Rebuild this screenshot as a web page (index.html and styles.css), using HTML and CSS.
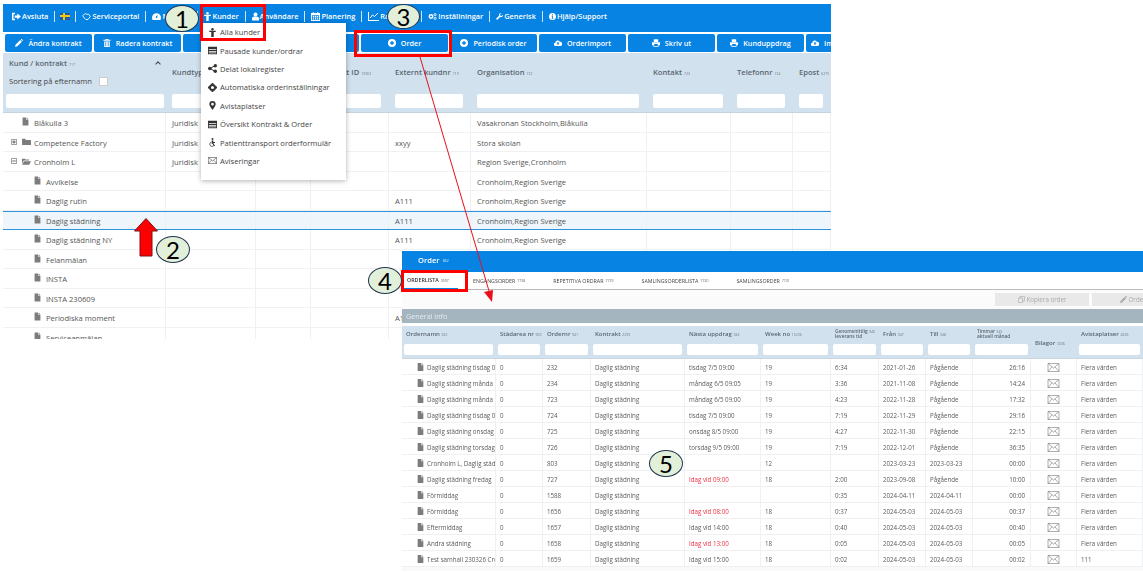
FILE: index.html
```html
<!DOCTYPE html>
<html lang="sv">
<head>
    <meta charset="UTF-8" />
    <title>Kunder och order</title>
    <link rel="stylesheet" href="styles.css">
</head>
<body>
<svg class="defs" width="0" height="0">
    <symbol id="i-doc" viewBox="0 0 12 14"><path d="M1 0h6v4h4v10H1zM8 0l3 3H8z"/></symbol>
    <symbol id="i-folder" viewBox="0 0 14 11"><path d="M0 1h5l1 2h8v8H0z"/></symbol>
    <symbol id="i-open" viewBox="0 0 15 11"><path d="M0 1h5l1 1h6v2H3L0 9zM3.5 5H15l-3 6H0z"/></symbol>
    <symbol id="i-plus" viewBox="0 0 7 7"><path fill="#fff" stroke="#888" d="M.5.5h6v6h-6z"/><path fill="#555" d="M3 1.5h1V3h1.500v1H4v1.500H3V4H1.500V3H3z"/></symbol>
    <symbol id="i-minus" viewBox="0 0 7 7"><path fill="#fff" stroke="#888" d="M.5.5h6v6h-6z"/><path fill="#555" d="M1.500 3h4v1h-4z"/></symbol>
    <symbol id="i-exit" viewBox="0 0 12 10"><path d="M4 0v2H2v6h2v2H0V0zM7 1l5 4-5 4V6.500H3.500v-3H7z"/></symbol>
    <symbol id="i-service" viewBox="0 0 12 10"><path fill="none" stroke="currentColor" stroke-width="1.200" d="M1 4l3-3 2 1h3l2 3-3 4H5L3 7z"/></symbol>
    <symbol id="i-gauge" viewBox="0 0 12 9"><path fill-rule="evenodd" d="M6 0a6 6 0 0 1 6 6c0 1-.3 2-.8 3H.8C.3 8 0 7 0 6a6 6 0 0 1 6-6zM5.300 4.500v2h1.400l1-4z"/></symbol>
    <symbol id="i-man" viewBox="0 0 8 11"><circle cx="4" cy="1.500" r="1.500"/><path d="M0 3.500h8v1.500H5.500v6h-3V5H0z"/></symbol>
    <symbol id="i-user" viewBox="0 0 9 10"><circle cx="4.500" cy="2.500" r="2.500"/><path d="M0 10V7.500C0 6 1.500 5 3 5h3c1.500 0 3 1 3 2.500V10z"/></symbol>
    <symbol id="i-cal" viewBox="0 0 10 10"><path fill-rule="evenodd" d="M0 1h2V0h1v1h4V0h1v1h2v9H0zM1 3.500v5.500h8V3.500zM2 4.500h1.500V6H2zM4.300 4.500h1.500V6H4.300zM6.500 4.500H8V6H6.500zM2 7h1.500v1.300H2zM4.300 7h1.500v1.300H4.300zM6.500 7H8v1.300H6.500z"/></symbol>
    <symbol id="i-chart" viewBox="0 0 11 9"><path d="M0 0h1v8h10v1H0z"/><path fill="none" stroke="currentColor" d="M2 6l2.500-3 2 1.500L10 1"/></symbol>
    <symbol id="i-cogs" viewBox="0 0 12 10"><circle cx="4" cy="5" r="2.300" fill="none" stroke="currentColor" stroke-width="2"/><circle cx="9.500" cy="2.500" r="1.400" fill="none" stroke="currentColor" stroke-width="1.200"/><circle cx="9.500" cy="7.500" r="1.400" fill="none" stroke="currentColor" stroke-width="1.200"/></symbol>
    <symbol id="i-wrench" viewBox="0 0 10 10"><path d="M10 2.500L8 4.300 6.300 3.800 5.800 2 7.600 0C6 -.3 4.300 1 4.200 2.600c0 .5.100 1 .2 1.300L0 8.300 1.700 10l4.400-4.400c2 .7 4.300-1 3.900-3.100z"/></symbol>
    <symbol id="i-info" viewBox="0 0 10 10"><path fill-rule="evenodd" d="M5 0a5 5 0 1 1 0 10A5 5 0 0 1 5 0zM4.200 1.800v1.500h1.600V1.800zM3.800 4v1h.6v2.300h-.6v1h2.400v-1h-.6V4z"/></symbol>
    <symbol id="i-pencil" viewBox="0 0 10 10"><path d="M0 10l.8-3L6.500 1.300l2.200 2.200L3 9.200zM7.200.6C7.800 0 8.500 0 9 .5l.5.5c.5.500.5 1.200-.1 1.800z"/></symbol>
    <symbol id="i-trash" viewBox="0 0 9 10"><path fill-rule="evenodd" d="M3 0h3l.5 1H9v1.200H0V1h2.500zM1 3h7v7H1zM2.500 4v5h1V4zM5.500 4v5h1V4z"/></symbol>
    <symbol id="i-add" viewBox="0 0 10 10"><path fill-rule="evenodd" d="M5 0a5 5 0 1 1 0 10A5 5 0 0 1 5 0zM4.200 2.500v1.700H2.500v1.600h1.700v1.700h1.600V5.800h1.700V4.200H5.800V2.500z"/></symbol>
    <symbol id="i-cloud" viewBox="0 0 12 9"><path fill-rule="evenodd" d="M2.500 9A2.500 2.500 0 0 1 2 4a3.500 3.500 0 0 1 6.700-1.200A3 3 0 0 1 9.500 9zM6 2.500L3.800 5.200h1.400V7.500h1.600V5.200h1.400z"/></symbol>
    <symbol id="i-print" viewBox="0 0 11 10"><path fill-rule="evenodd" d="M2.500 0h6v3.500h-6zM0 4h11v4H9v2H2V8H0zM3 6.500V9h5V6.500z"/></symbol>
    <symbol id="i-list" viewBox="0 0 11 9"><path fill-rule="evenodd" d="M0 0h11v9H0zM1 3v1h9V3zM1 5v1h9V5zM1 7v1h9V7z"/></symbol>
    <symbol id="i-share" viewBox="0 0 9 9"><circle cx="1.800" cy="4.500" r="1.800"/><circle cx="7.300" cy="1.700" r="1.700"/><circle cx="7.300" cy="7.300" r="1.700"/><path fill="none" stroke="currentColor" d="M2 4.500l5-2.800M2 4.500l5 2.800"/></symbol>
    <symbol id="i-cog" viewBox="0 0 10 10"><circle cx="5" cy="5" r="2.800" fill="none" stroke="currentColor" stroke-width="2.200"/><path d="M4 0h2v2H4zM4 8h2v2H4zM0 4h2v2H0zM8 4h2v2H8z"/></symbol>
    <symbol id="i-pin" viewBox="0 0 7 10"><path fill-rule="evenodd" d="M3.500 0a3.500 3.500 0 0 1 3.500 3.500C7 5.500 4.500 8 3.500 10 2.500 8 0 5.500 0 3.500A3.500 3.500 0 0 1 3.500 0zM3.500 2a1.500 1.500 0 1 0 0 3 1.500 1.500 0 0 0 0-3z"/></symbol>
    <symbol id="i-wheel" viewBox="0 0 9 11"><circle cx="4.500" cy="1.200" r="1.200"/><path d="M3.500 3h2v2h2v1H5.500l2 3.500-1 .5L4.500 7H3.500z"/><path fill="none" stroke="currentColor" d="M2.800 5a2.800 2.800 0 1 0 3.700 3.800"/></symbol>
    <symbol id="i-mail" viewBox="0 0 12 9"><path fill="none" stroke="currentColor" stroke-width=".7" d="M.5.500h11v8H.5zM.5.500L6 5l5.500-4.500M.5 8.500L4.500 4M11.500 8.500L7.500 4"/></symbol>
    <symbol id="i-copy" viewBox="0 0 10 10"><path fill="none" stroke="currentColor" d="M.5 3h6v6.500h-6zM3 3V.5h6.500v6.500H6.500"/></symbol>
</svg>

<div class="canvas">
    <div class="main">
        <nav class="topbar">
            <a class="nav"><svg class="ic"><use href="#i-exit"/></svg>Avsluta</a>
            <a class="nav"><span class="flag"></span></a>
            <a class="nav"><svg class="ic"><use href="#i-service"/></svg>Serviceportal</a>
            <a class="nav nav-hidden"><svg class="ic"><use href="#i-gauge"/></svg>Min sida</a>
            <a class="nav"><svg class="ic ic-s"><use href="#i-man"/></svg>Kunder</a>
            <a class="nav"><svg class="ic ic-s"><use href="#i-user"/></svg>Användare</a>
            <a class="nav"><svg class="ic"><use href="#i-cal"/></svg>Planering</a>
            <a class="nav nav-report"><svg class="ic ic-w"><use href="#i-chart"/></svg>Rapporter</a>
            <a class="nav"><svg class="ic"><use href="#i-cogs"/></svg>Inställningar</a>
            <a class="nav"><svg class="ic ic-s"><use href="#i-wrench"/></svg>Generisk</a>
            <a class="nav last"><svg class="ic ic-s"><use href="#i-info"/></svg>Hjälp/Support</a>
        </nav>

        <div class="toolbar">
            <button class="btn"><svg class="ic"><use href="#i-pencil"/></svg>Ändra kontrakt</button>
            <button class="btn"><svg class="ic"><use href="#i-trash"/></svg>Radera kontrakt</button>
            <button class="btn"><svg class="ic"><use href="#i-add"/></svg>Kopiera</button>
            <button class="btn"><svg class="ic"><use href="#i-add"/></svg>Ny kund</button>
            <button class="btn"><svg class="ic"><use href="#i-add"/></svg>Order</button>
            <button class="btn"><svg class="ic"><use href="#i-add"/></svg>Periodisk order</button>
            <button class="btn"><svg class="ic"><use href="#i-cloud"/></svg>Orderimport</button>
            <button class="btn"><svg class="ic"><use href="#i-print"/></svg>Skriv ut</button>
            <button class="btn"><svg class="ic"><use href="#i-print"/></svg>Kunduppdrag</button>
            <button class="btn btn-cut"><svg class="ic"><use href="#i-cloud"/></svg>Importera</button>
        </div>

        <div class="cols thead">
            <div class="th first">
                <div class="th-title">Kund / kontrakt <small>717</small><span class="chev"></span></div>
                <div class="th-sort">Sortering på efternamn<span class="check"></span></div>
                <input class="filter">
            </div>
            <div class="th"><div class="label">Kundtyp <small>718</small></div><input class="filter"></div>
            <div class="th"><div class="label">Org.nr <small>720</small></div><input class="filter"></div>
            <div class="th"><div class="label">Kontrakt ID <small>10963</small></div><input class="filter"></div>
            <div class="th"><div class="label">Externt kundnr <small>719</small></div><input class="filter"></div>
            <div class="th"><div class="label">Organisation <small>722</small></div><input class="filter"></div>
            <div class="th"><div class="label">Kontakt <small>723</small></div><input class="filter"></div>
            <div class="th"><div class="label">Telefonnr <small>724</small></div><input class="filter"></div>
            <div class="th"><div class="label">Epost <small>6275</small></div><input class="filter"></div>
        </div>

        <div class="cols row">
            <div class="td name lvl1"><svg class="doc"><use href="#i-doc"/></svg>Blåkulla 3</div><div class="td">Juridisk</div><div class="td"></div><div class="td"></div><div class="td"></div><div class="td">Vasakronan Stockholm,Blåkulla</div><div class="td"></div><div class="td"></div><div class="td"></div>
        </div>
        <div class="cols row">
            <div class="td name"><svg class="box"><use href="#i-plus"/></svg><svg class="fold"><use href="#i-folder"/></svg>Competence Factory</div><div class="td">Juridisk</div><div class="td"></div><div class="td"></div><div class="td">xxyy</div><div class="td">Stora skolan</div><div class="td"></div><div class="td"></div><div class="td"></div>
        </div>
        <div class="cols row">
            <div class="td name"><svg class="box"><use href="#i-minus"/></svg><svg class="fold"><use href="#i-open"/></svg>Cronholm L</div><div class="td">Juridisk</div><div class="td"></div><div class="td"></div><div class="td"></div><div class="td">Region Sverige,Cronholm</div><div class="td"></div><div class="td"></div><div class="td"></div>
        </div>
        <div class="cols row">
            <div class="td name lvl2"><svg class="doc"><use href="#i-doc"/></svg>Avvikelse</div><div class="td"></div><div class="td"></div><div class="td"></div><div class="td"></div><div class="td">Cronholm,Region Sverige</div><div class="td"></div><div class="td"></div><div class="td"></div>
        </div>
        <div class="cols row">
            <div class="td name lvl2"><svg class="doc"><use href="#i-doc"/></svg>Daglig rutin</div><div class="td"></div><div class="td"></div><div class="td"></div><div class="td">A111</div><div class="td">Cronholm,Region Sverige</div><div class="td"></div><div class="td"></div><div class="td"></div>
        </div>
        <div class="cols row selected">
            <div class="td name lvl2"><svg class="doc"><use href="#i-doc"/></svg>Daglig städning</div><div class="td"></div><div class="td"></div><div class="td"></div><div class="td">A111</div><div class="td">Cronholm,Region Sverige</div><div class="td"></div><div class="td"></div><div class="td"></div>
        </div>
        <div class="cols row">
            <div class="td name lvl2"><svg class="doc"><use href="#i-doc"/></svg>Daglig städning NY</div><div class="td"></div><div class="td"></div><div class="td"></div><div class="td">A111</div><div class="td">Cronholm,Region Sverige</div><div class="td"></div><div class="td"></div><div class="td"></div>
        </div>
        <div class="cols row">
            <div class="td name lvl2"><svg class="doc"><use href="#i-doc"/></svg>Felanmälan</div><div class="td"></div><div class="td"></div><div class="td"></div><div class="td"></div><div class="td"></div><div class="td"></div><div class="td"></div><div class="td"></div>
        </div>
        <div class="cols row">
            <div class="td name lvl2"><svg class="doc"><use href="#i-doc"/></svg>INSTA</div><div class="td"></div><div class="td"></div><div class="td"></div><div class="td"></div><div class="td"></div><div class="td"></div><div class="td"></div><div class="td"></div>
        </div>
        <div class="cols row">
            <div class="td name lvl2"><svg class="doc"><use href="#i-doc"/></svg>INSTA 230609</div><div class="td"></div><div class="td"></div><div class="td"></div><div class="td"></div><div class="td"></div><div class="td"></div><div class="td"></div><div class="td"></div>
        </div>
        <div class="cols row">
            <div class="td name lvl2"><svg class="doc"><use href="#i-doc"/></svg>Periodiska moment</div><div class="td"></div><div class="td"></div><div class="td"></div><div class="td">A111</div><div class="td"></div><div class="td"></div><div class="td"></div><div class="td"></div>
        </div>
        <div class="cols row">
            <div class="td name lvl2"><svg class="doc"><use href="#i-doc"/></svg>Serviceanmälan</div><div class="td"></div><div class="td"></div><div class="td"></div><div class="td"></div><div class="td"></div><div class="td"></div><div class="td"></div><div class="td"></div>
        </div>
    </div>

    <ul class="menu">
        <li><svg class="ic"><use href="#i-man"/></svg>Alla kunder</li>
        <li><svg class="ic"><use href="#i-list"/></svg>Pausade kunder/ordrar</li>
        <li><svg class="ic"><use href="#i-share"/></svg>Delat lokalregister</li>
        <li><svg class="ic"><use href="#i-cog"/></svg>Automatiska orderinställningar</li>
        <li><svg class="ic"><use href="#i-pin"/></svg>Avistaplatser</li>
        <li><svg class="ic"><use href="#i-list"/></svg>Översikt Kontrakt &amp; Order</li>
        <li><svg class="ic"><use href="#i-wheel"/></svg>Patienttransport orderformulär</li>
        <li><svg class="ic"><use href="#i-mail"/></svg>Aviseringar</li>
    </ul>

    <section class="order">
        <header class="order-head">Order <small>862</small></header>
        <div class="tabs">
            <a class="tab active">ORDERLISTA <small>3597</small></a>
            <a class="tab">ENGÅNGSORDER <small>7738</small></a>
            <a class="tab">REPETITIVA ORDRAR <small>7739</small></a>
            <a class="tab">SAMLINGSORDERLISTA <small>7740</small></a>
            <a class="tab">SAMLINGSORDER <small>7741</small></a>
        </div>
        <div class="actions">
            <button class="grey-btn"><svg class="ic"><use href="#i-copy"/></svg>Kopiera order</button>
            <button class="grey-btn"><svg class="ic"><use href="#i-pencil"/></svg>Order info</button>
        </div>
        <div class="info-bar">General info</div>

        <div class="ocols ohead">
            <div class="oth"><div class="olabel">Ordernamn <small>942</small></div><input class="ofilter"></div>
            <div class="oth"><div class="olabel">Städarea nr <small>969</small></div><input class="ofilter"></div>
            <div class="oth"><div class="olabel">Ordernr <small>941</small></div><input class="ofilter"></div>
            <div class="oth"><div class="olabel">Kontrakt <small>2299</small></div><input class="ofilter"></div>
            <div class="oth"><div class="olabel">Nästa uppdrag <small>944</small></div><input class="ofilter"></div>
            <div class="oth"><div class="olabel">Week no <small>15236</small></div><input class="ofilter"></div>
            <div class="oth"><div class="olabel tight">Genomsnittlig <small>946</small><br>leverans tid</div><input class="ofilter"></div>
            <div class="oth"><div class="olabel">Från <small>947</small></div><input class="ofilter"></div>
            <div class="oth"><div class="olabel">Till <small>948</small></div><input class="ofilter"></div>
            <div class="oth"><div class="olabel tight">Timmar <small>949</small><br>aktuell månad</div><input class="ofilter"></div>
            <div class="oth plain"><div class="olabel">Bilagor <small>3336</small></div></div>
            <div class="oth"><div class="olabel">Avistaplatser <small>4696</small></div><input class="ofilter"></div>
        </div>

        <div class="ocols orow"><div class="otd oname"><svg class="odoc"><use href="#i-doc"/></svg>Daglig städning tisdag 0</div><div class="otd">0</div><div class="otd">232</div><div class="otd">Daglig städning</div><div class="otd">tisdag 7/5 09:00</div><div class="otd">19</div><div class="otd">6:34</div><div class="otd">2021-01-26</div><div class="otd">Pågående</div><div class="otd num">26:16</div><div class="otd mid"><svg class="mail"><use href="#i-mail"/></svg></div><div class="otd">Fiera värden</div></div>
        <div class="ocols orow"><div class="otd oname"><svg class="odoc"><use href="#i-doc"/></svg>Daglig städning månda</div><div class="otd">0</div><div class="otd">234</div><div class="otd">Daglig städning</div><div class="otd">måndag 6/5 09:05</div><div class="otd">19</div><div class="otd">3:36</div><div class="otd">2021-11-08</div><div class="otd">Pågående</div><div class="otd num">14:24</div><div class="otd mid"><svg class="mail"><use href="#i-mail"/></svg></div><div class="otd">Fiera värden</div></div>
        <div class="ocols orow"><div class="otd oname"><svg class="odoc"><use href="#i-doc"/></svg>Daglig städning månda</div><div class="otd">0</div><div class="otd">723</div><div class="otd">Daglig städning</div><div class="otd">måndag 6/5 09:00</div><div class="otd">19</div><div class="otd">4:23</div><div class="otd">2022-11-28</div><div class="otd">Pågående</div><div class="otd num">17:32</div><div class="otd mid"><svg class="mail"><use href="#i-mail"/></svg></div><div class="otd">Fiera värden</div></div>
        <div class="ocols orow"><div class="otd oname"><svg class="odoc"><use href="#i-doc"/></svg>Daglig städning tisdag 0</div><div class="otd">0</div><div class="otd">724</div><div class="otd">Daglig städning</div><div class="otd">tisdag 7/5 09:00</div><div class="otd">19</div><div class="otd">7:19</div><div class="otd">2022-11-29</div><div class="otd">Pågående</div><div class="otd num">29:16</div><div class="otd mid"><svg class="mail"><use href="#i-mail"/></svg></div><div class="otd">Fiera värden</div></div>
        <div class="ocols orow"><div class="otd oname"><svg class="odoc"><use href="#i-doc"/></svg>Daglig städning onsdag</div><div class="otd">0</div><div class="otd">725</div><div class="otd">Daglig städning</div><div class="otd">onsdag 8/5 09:00</div><div class="otd">19</div><div class="otd">4:27</div><div class="otd">2022-11-30</div><div class="otd">Pågående</div><div class="otd num">22:15</div><div class="otd mid"><svg class="mail"><use href="#i-mail"/></svg></div><div class="otd">Fiera värden</div></div>
        <div class="ocols orow"><div class="otd oname"><svg class="odoc"><use href="#i-doc"/></svg>Daglig städning torsdag</div><div class="otd">0</div><div class="otd">726</div><div class="otd">Daglig städning</div><div class="otd">torsdag 9/5 09:00</div><div class="otd">19</div><div class="otd">7:19</div><div class="otd">2022-12-01</div><div class="otd">Pågående</div><div class="otd num">36:35</div><div class="otd mid"><svg class="mail"><use href="#i-mail"/></svg></div><div class="otd">Fiera värden</div></div>
        <div class="ocols orow"><div class="otd oname"><svg class="odoc"><use href="#i-doc"/></svg>Cronholm L, Daglig städ</div><div class="otd">0</div><div class="otd">803</div><div class="otd">Daglig städning</div><div class="otd"></div><div class="otd">12</div><div class="otd"></div><div class="otd">2023-03-23</div><div class="otd">2023-03-23</div><div class="otd num">00:00</div><div class="otd mid"><svg class="mail"><use href="#i-mail"/></svg></div><div class="otd">Fiera värden</div></div>
        <div class="ocols orow"><div class="otd oname"><svg class="odoc"><use href="#i-doc"/></svg>Daglig städning fredag</div><div class="otd">0</div><div class="otd">727</div><div class="otd">Daglig städning</div><div class="otd late">Idag vid 09:00</div><div class="otd">18</div><div class="otd">2:00</div><div class="otd">2023-09-08</div><div class="otd">Pågående</div><div class="otd num">10:00</div><div class="otd mid"><svg class="mail"><use href="#i-mail"/></svg></div><div class="otd">Fiera värden</div></div>
        <div class="ocols orow"><div class="otd oname"><svg class="odoc"><use href="#i-doc"/></svg>Förmiddag</div><div class="otd">0</div><div class="otd">1588</div><div class="otd">Daglig städning</div><div class="otd"></div><div class="otd"></div><div class="otd">0:35</div><div class="otd">2024-04-11</div><div class="otd">2024-04-11</div><div class="otd num">00:00</div><div class="otd mid"><svg class="mail"><use href="#i-mail"/></svg></div><div class="otd">Fiera värden</div></div>
        <div class="ocols orow"><div class="otd oname"><svg class="odoc"><use href="#i-doc"/></svg>Förmiddag</div><div class="otd">0</div><div class="otd">1656</div><div class="otd">Daglig städning</div><div class="otd late">Idag vid 08:00</div><div class="otd">18</div><div class="otd">0:37</div><div class="otd">2024-05-03</div><div class="otd">2024-05-03</div><div class="otd num">00:37</div><div class="otd mid"><svg class="mail"><use href="#i-mail"/></svg></div><div class="otd">Fiera värden</div></div>
        <div class="ocols orow"><div class="otd oname"><svg class="odoc"><use href="#i-doc"/></svg>Eftermiddag</div><div class="otd">0</div><div class="otd">1657</div><div class="otd">Daglig städning</div><div class="otd">Idag vid 14:00</div><div class="otd">18</div><div class="otd">0:40</div><div class="otd">2024-05-03</div><div class="otd">2024-05-03</div><div class="otd num">00:40</div><div class="otd mid"><svg class="mail"><use href="#i-mail"/></svg></div><div class="otd">Fiera värden</div></div>
        <div class="ocols orow"><div class="otd oname"><svg class="odoc"><use href="#i-doc"/></svg>Andra städning</div><div class="otd">0</div><div class="otd">1658</div><div class="otd">Daglig städning</div><div class="otd late">Idag vid 13:00</div><div class="otd">18</div><div class="otd">0:05</div><div class="otd">2024-05-03</div><div class="otd">2024-05-03</div><div class="otd num">00:05</div><div class="otd mid"><svg class="mail"><use href="#i-mail"/></svg></div><div class="otd">Fiera värden</div></div>
        <div class="ocols orow"><div class="otd oname"><svg class="odoc"><use href="#i-doc"/></svg>Test samhall 230326 Cro</div><div class="otd">0</div><div class="otd">1659</div><div class="otd">Daglig städning</div><div class="otd">Idag vid 15:00</div><div class="otd">18</div><div class="otd">0:02</div><div class="otd">2024-05-03</div><div class="otd">2024-05-03</div><div class="otd num">00:02</div><div class="otd mid"><svg class="mail"><use href="#i-mail"/></svg></div><div class="otd">111</div></div>
        <div class="order-foot"></div>
    </section>

    <!-- annotations on top of the screenshot -->
    <svg class="pointer" width="1143" height="573">
        <path d="M420 57L489 291" stroke="#e8101a" stroke-width="1" fill="none"/>
        <path d="M492 302L484 292 493 290z" fill="#e8101a"/>
        <path d="M146 218.500L157.500 231H152V256H140V231H134.500z" fill="#f00" stroke="#7a1218" stroke-width="1"/>
    </svg>
    <div class="mark mark-kunder"></div>
    <div class="mark mark-order"></div>
    <div class="mark mark-tab"></div>
    <div class="step step-1">1</div>
    <div class="step step-2">2</div>
    <div class="step step-3">3</div>
    <div class="step step-4">4</div>
    <div class="step step-5">5</div>
</div>
</body>
</html>
```

FILE: styles.css
```css
* {
    margin: 0;
    padding: 0;
    box-sizing: border-box;
}
html, body {
    background: #fff;
    overflow: hidden;
}
body {
    font-family: "Open Sans", sans-serif;
    color: #555;
}
.defs {
    position: absolute;
}
.canvas {
    position: relative;
    width: 1143px;
    height: 573px;
    overflow: hidden;
}
small {
    font-size: 3.5px;
    font-weight: 400;
    opacity: .8;
}
input {
    display: block;
    border: 0;
    background: #fff;
}
svg {
    fill: currentColor;
}

/* left page */
.main {
    width: 828px;
    height: 335px;
    margin: 4px 0 0 3px;
    overflow: hidden;
}
.topbar {
    display: flex;
    align-items: center;
    height: 28px;
    padding: 0 0 4px 3px;
    background: #0683e3;
    color: #fff;
    font-size: 7.400px;
    font-weight: 600;
}
.nav {
    display: flex;
    align-items: center;
    height: 11px;
    padding: 0 6px;
    border-right: 1px solid #cfe6f9;
    white-space: nowrap;
}
.nav.last {
    border-right: 0;
}
.nav-hidden {
    width: 52px;
    flex: none;
}
.nav-report {
    width: 60px;
    flex: none;
    overflow: hidden;
}
.ic {
    width: 9px;
    height: 9px;
    margin-right: 1px;
    flex: none;
}
.ic-s {
    width: 7px;
}
.ic-w {
    width: 11px;
}
.flag {
    width: 10px;
    height: 7px;
    margin: 0 -1px;
    background:
        linear-gradient(#f5c518, #f5c518) 3px 0 / 2px 7px no-repeat,
        linear-gradient(#f5c518, #f5c518) 0 2.500px / 10px 2px no-repeat,
        #1d5fa8;
}
.toolbar {
    display: flex;
    gap: 2px;
    height: 21px;
    padding: 1.500px 0 0 2px;
    overflow: hidden;
}
.btn {
    display: flex;
    align-items: center;
    justify-content: center;
    flex: 0 0 87px;
    height: 18px;
    border: 0;
    border-radius: 2px;
    background: #0683e3;
    color: #fff;
    font: 600 7.200px "Open Sans", sans-serif;
    white-space: nowrap;
}
.btn .ic {
    width: 8px;
    height: 8px;
    margin-right: 5px;
}
.btn-cut {
    justify-content: flex-start;
    padding-left: 5px;
}
.cols {
    display: grid;
    grid-template-columns: 163px 90px 55px 78px 82px 176px 84px 62px 1fr;
}
.thead {
    height: 60px;
    background: #d2e1ee;
    border-bottom: 1px solid #c6d2dc;
    font-size: 7.6px;
    font-weight: 600;
    color: #5b6770;
}
.th {
    display: flex;
    flex-direction: column;
    justify-content: flex-end;
    padding: 0 8px 4px 6px;
    min-width: 0;
    white-space: nowrap;
}
.th.first {
    padding: 0 2px 4px 3px;
}
.label {
    margin-bottom: 17px;
}
.th-title {
    position: relative;
    margin: 0 0 8px 3px;
}
.th-sort {
    display: flex;
    align-items: center;
    margin: 0 0 8px 3px;
    font-weight: 400;
    color: #444;
}
.chev {
    position: absolute;
    right: 4px;
    top: 4px;
    width: 4px;
    height: 4px;
    border-left: 1px solid #444;
    border-top: 1px solid #444;
    transform: rotate(45deg);
}
.check {
    width: 9px;
    height: 9px;
    margin-left: 7px;
    background: #fff;
    border: 1px solid #ccc;
}
.filter {
    width: 100%;
    height: 14px;
    border-radius: 2px;
}
.row {
    height: 19.500px;
    border-bottom: 1px solid #f0f1f2;
    font-size: 7.6px;
    color: #555;
}
.row.selected {
    background: #eef6fc;
    border-top: 1px solid #2b93e0;
    border-bottom: 1px solid #2b93e0;
}
.td {
    display: flex;
    align-items: center;
    padding: 2px 0 0 6px;
    border-right: 1px solid #eff0f1;
    white-space: nowrap;
    overflow: hidden;
}
.name {
    color: #555;
}
.name.lvl1 {
    padding-left: 19px;
}
.name.lvl2 {
    padding-left: 31px;
}
.doc {
    width: 7px;
    height: 9px;
    margin: -3px 5px 0 0;
    color: #7c7c7c;
    flex: none;
}
.box {
    width: 6px;
    height: 6px;
    margin: -2px 5px 0 2px;
    flex: none;
}
.fold {
    width: 9px;
    height: 7px;
    margin: -2px 3px 0 0;
    color: #7c7c7c;
    flex: none;
}

/* dropdown */
.menu {
    position: absolute;
    left: 201px;
    top: 23px;
    width: 145px;
    height: 157px;
    padding-top: 0;
    list-style: none;
    background: #fff;
    box-shadow: 0 1px 5px rgba(0, 0, 0, .3);
    font-size: 7.6px;
    color: #444;
}
.menu li {
    display: flex;
    align-items: center;
    height: 18.400px;
    padding-left: 7px;
    white-space: nowrap;
}
.menu .ic {
    width: 9px;
    margin-right: 3px;
    color: #333;
}

/* pasted order window */
.order {
    position: absolute;
    left: 402px;
    top: 251px;
    width: 741px;
    height: 322px;
    overflow: hidden;
    background: #fff;
    filter: blur(.35px);
}
.order-head {
    display: flex;
    align-items: center;
    gap: 3px;
    height: 21px;
    padding: 0 0 3px 16px;
    background: #0683e3;
    color: #fff;
    font-size: 7.6px;
    font-weight: 600;
}
.tabs {
    display: flex;
    height: 18px;
    border-bottom: 1px solid #bbb;
    font-size: 5.300px;
    color: #444;
}
.tab {
    display: flex;
    align-items: center;
    gap: 2px;
    padding: 0 3px 0 5px;
    margin-right: 20px;
    white-space: nowrap;
}
.tab.active {
    width: 56px;
    margin-right: 10px;
    border-bottom: 1px solid #0683e3;
    font-weight: 600;
    color: #333;
}
.actions {
    display: flex;
    justify-content: flex-end;
    gap: 3px;
    height: 19px;
    padding: 3px 0 0;
    margin-right: -43px;
    background: #fbfbfb;
}
.grey-btn {
    display: flex;
    align-items: center;
    justify-content: center;
    width: 94px;
    height: 13px;
    border: 0;
    background: #e9e9e9;
    color: #aaa;
    font: 400 6.200px "Open Sans", sans-serif;
}
.grey-btn .ic {
    width: 7px;
    height: 7px;
    margin-right: 2px;
}
.info-bar {
    display: flex;
    align-items: center;
    height: 14px;
    padding-left: 4px;
    background: #a5b5bf;
    color: #e4ebef;
    font-size: 7.200px;
}
.ocols {
    display: grid;
    grid-template-columns: 94px 47px 48px 94px 76px 70px 48px 47px 47px 58px 46px 1fr;
}
.ohead {
    height: 33px;
    margin-top: 3px;
    background: #d2e1ee;
    border-bottom: 1px solid #c9d5df;
    font-size: 6px;
    font-weight: 600;
    color: #5b6770;
}
.oth {
    display: flex;
    flex-direction: column;
    justify-content: flex-end;
    padding: 0 3px 3px 2px;
    min-width: 0;
    white-space: nowrap;
}
.oth.plain {
    justify-content: center;
    padding: 8px 0 0 2px;
}
.olabel {
    margin-bottom: 6px;
    padding-left: 2px;
}
.olabel.tight {
    font-size: 4.800px;
    line-height: 4.600px;
    margin-bottom: 5px;
}
.ofilter {
    width: 100%;
    height: 11px;
    border-radius: 2px;
}
.orow {
    height: 16px;
    border-bottom: 1px solid #eff0f1;
    font-size: 6.200px;
    color: #5a5a5a;
}
.otd {
    display: flex;
    align-items: center;
    padding: 1px 0 0 4px;
    border-right: 1px solid #eff0f1;
    white-space: nowrap;
    overflow: hidden;
}
.oname {
    padding-left: 15px;
}
.odoc {
    width: 7px;
    height: 8px;
    margin-right: 3px;
    color: #7c7c7c;
    flex: none;
}
.num {
    justify-content: flex-end;
    padding-right: 5px;
}
.mid {
    justify-content: center;
    padding-left: 0;
}
.mail {
    width: 13px;
    height: 9px;
    color: #8a8a8a;
}
.late {
    color: #f03040;
}
.order-foot {
    height: 4px;
    background: #f8f9fa;
}

/* annotations */
.pointer {
    position: absolute;
    left: 0;
    top: 0;
}
.mark {
    position: absolute;
    border: 3px solid #f00;
}
.mark-kunder {
    left: 200px;
    top: 4px;
    width: 66px;
    height: 37px;
}
.mark-order {
    left: 354px;
    top: 30px;
    width: 98px;
    height: 27px;
}
.mark-tab {
    left: 401px;
    top: 270px;
    width: 67px;
    height: 22px;
}
.step {
    position: absolute;
    display: flex;
    align-items: center;
    justify-content: center;
    width: 34px;
    height: 27px;
    border: 1px solid #1f3550;
    border-radius: 50%;
    background: #e2efd9;
    color: #000;
    font: 400 24px Lato, sans-serif;
}
.step-1 { left: 165px; top: 5px; }
.step-2 { left: 156px; top: 236px; }
.step-3 { left: 387px; top: 4px; width: 33px; height: 25px; }
.step-4 { left: 368px; top: 267px; }
.step-5 { left: 649px; top: 450px; }
```
